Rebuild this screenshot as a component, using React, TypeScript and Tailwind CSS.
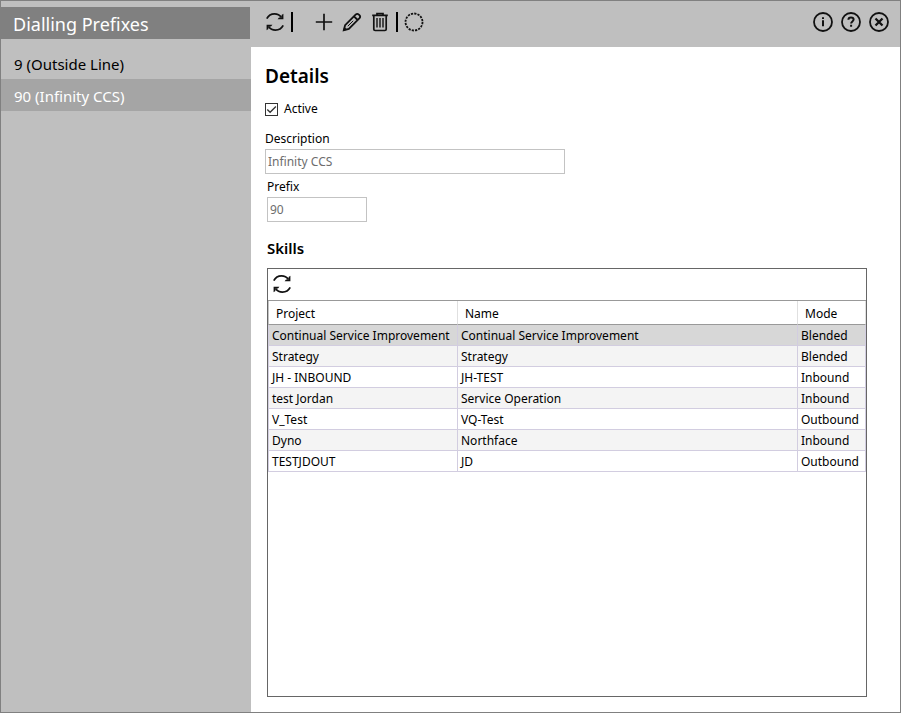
import { useState } from 'react'

const prefixes = ['9 (Outside Line)', '90 (Infinity CCS)']

const skills = [
  { project: 'Continual Service Improvement', name: 'Continual Service Improvement', mode: 'Blended' },
  { project: 'Strategy', name: 'Strategy', mode: 'Blended' },
  { project: 'JH - INBOUND', name: 'JH-TEST', mode: 'Inbound' },
  { project: 'test Jordan', name: 'Service Operation', mode: 'Inbound' },
  { project: 'V_Test', name: 'VQ-Test', mode: 'Outbound' },
  { project: 'Dyno', name: 'Northface', mode: 'Inbound' },
  { project: 'TESTJDOUT', name: 'JD', mode: 'Outbound' },
]

function Icon({ children, width = 2 }: { children: React.ReactNode; width?: number }) {
  return (
    <svg viewBox="0 0 20 20" className="h-5 w-5" fill="none" stroke="currentColor" strokeWidth={width} aria-hidden="true">
      {children}
    </svg>
  )
}

function IconButton({ label, children }: { label: string; children: React.ReactNode }) {
  return (
    <button type="button" aria-label={label} className="flex h-7 w-7 items-center justify-center text-[#111]">
      {children}
    </button>
  )
}

function RefreshIcon() {
  return (
    <Icon width={1.8}>
      <path d="M1.8 6.6C3.4 3.6 6.2 1.9 9.5 1.9c3 0 5.3 1.3 7 3.7" />
      <path d="M18.4 1.8v5.5h-5.8l1.4-1.9h2.6V3z" fill="currentColor" stroke="none" />
      <path d="M18.2 13.4c-1.6 3-4.4 4.7-7.7 4.7-3 0-5.3-1.3-7-3.7" />
      <path d="M1.6 18.2v-5.5h5.8L6 14.6H3.4V17z" fill="currentColor" stroke="none" />
    </Icon>
  )
}

function Separator() {
  return <span className="mx-[2px] h-5 w-[2px] bg-black" />
}

export default function App() {
  const [selected, setSelected] = useState(1)
  const [active, setActive] = useState(true)
  const [description, setDescription] = useState('Infinity CCS')
  const [prefix, setPrefix] = useState('90')

  return (
    <div className="flex min-h-screen border border-[#808080] bg-white font-['Noto_Sans','Open_Sans',sans-serif] text-xs text-black">
      <aside className="w-[250px] shrink-0 bg-[#bfbfbf] pt-[6px]">
        <h1 className="mr-px mb-2 h-8 bg-[#808080] pl-3 text-lg leading-[34px] text-white">Dialling Prefixes</h1>
        <ul>
          {prefixes.map((p, i) => (
            <li key={p}>
              <button
                type="button"
                onClick={() => setSelected(i)}
                className={`block h-8 w-full pl-[13px] text-left text-[15px] leading-[34px] ${i === selected ? 'bg-[#a5a5a5] text-white' : ''}`}
              >
                {p}
              </button>
            </li>
          ))}
        </ul>
      </aside>

      <div className="flex min-w-0 flex-1 flex-col">
        <div className="flex h-[46px] items-center bg-[#bfbfbf] pr-[7px] pb-1 pl-[10px]">
          <IconButton label="Refresh">
            <RefreshIcon />
          </IconButton>
          <Separator />
          <div className="ml-[15px] flex">
            <IconButton label="Add">
              <Icon width={1.7}>
                <path d="M10 1.8v16.4M1.8 10h16.4" />
              </Icon>
            </IconButton>
            <IconButton label="Edit">
              <Icon width={1.8}>
                <path d="M1.8 18.2l1.3-5L13.6 2.7c1-1 2.3-1 3.2-.1l.6.6c.9.9.9 2.2-.1 3.2L6.8 16.9zM12 4.3l3.7 3.7" />
                <path d="M1 19l1.2-4.2 3 3z" fill="currentColor" stroke="none" />
                <path d="M5.8 14.2l5.4-5.4" strokeWidth="1" />
              </Icon>
            </IconButton>
            <IconButton label="Delete">
              <Icon width={1.7}>
                <path d="M2.2 3.3h15.6M7 3V1.5h6V3M3.8 3.5v13.7c0 .8.5 1.3 1.3 1.3h9.8c.8 0 1.3-.5 1.3-1.3V3.5" />
                <path d="M7 6v9.5M10 6v9.5M13 6v9.5" strokeWidth="1.4" />
              </Icon>
            </IconButton>
          </div>
          <Separator />
          <IconButton label="Status">
            <Icon>
              <circle cx="10" cy="10" r="8.5" strokeWidth="1.8" strokeDasharray="2.2 1.138" />
            </Icon>
          </IconButton>
          <div className="ml-auto flex">
            <IconButton label="Information">
              <Icon>
                <circle cx="10" cy="10" r="9" strokeWidth="1.8" />
                <path d="M10 8.3v6M10 5.2v1.9" />
              </Icon>
            </IconButton>
            <IconButton label="Help">
              <Icon>
                <circle cx="10" cy="10" r="9" strokeWidth="1.8" />
                <path d="M7.4 7.8c0-1.5 1.1-2.4 2.6-2.4s2.6.9 2.6 2.2c0 1.9-2.5 1.9-2.5 4M10.1 12.8v2" />
              </Icon>
            </IconButton>
            <IconButton label="Close">
              <Icon>
                <circle cx="10" cy="10" r="9" strokeWidth="1.8" />
                <path d="M6.5 6.5l7 7M13.5 6.5l-7 7" strokeWidth="2.3" />
              </Icon>
            </IconButton>
          </div>
        </div>

        <main className="flex flex-1 flex-col pt-[13px] pr-[33px] pb-[15px] pl-[14px]">
          <h2 className="text-[19px] leading-8 font-semibold">Details</h2>

          <label className="mt-2 flex h-[18px] items-center leading-5">
            <span className="mr-[6px] grid">
              <input
                type="checkbox"
                checked={active}
                onChange={(e) => setActive(e.target.checked)}
                className="peer col-start-1 row-start-1 h-[13px] w-[13px] appearance-none border border-[#333] bg-white"
              />
              <svg viewBox="0 0 13 13" className="pointer-events-none invisible col-start-1 row-start-1 h-[13px] w-[13px] peer-checked:visible" fill="none" stroke="#333" strokeWidth="1.3">
                <path d="M2.3 6.5l2.8 2.8 5.8-5.8" />
              </svg>
            </span>
            Active
          </label>

          <label htmlFor="description" className="mt-[11px] leading-5">Description</label>
          <input
            id="description"
            value={description}
            onChange={(e) => setDescription(e.target.value)}
            className="h-[25px] w-[300px] border border-[#c3c3c3] px-[2px] text-[#6d6d6d]"
          />

          <div className="flex flex-1 flex-col pl-[2px]">
            <label htmlFor="prefix" className="mt-[3px] leading-5">Prefix</label>
            <input
              id="prefix"
              value={prefix}
              onChange={(e) => setPrefix(e.target.value)}
              className="h-[25px] w-[100px] border border-[#c3c3c3] px-[2px] text-[#6d6d6d]"
            />

            <h3 className="mt-[15px] mb-[9px] text-[15px] leading-[22px] font-semibold">Skills</h3>

            <section className="flex-1 border border-[#666]">
              <div className="flex h-8 items-center border-b border-[#999] pb-[2px]">
                <IconButton label="Refresh skills">
                  <RefreshIcon />
                </IconButton>
              </div>
              <table className="w-full table-fixed border-separate border-spacing-0 text-left">
                <colgroup>
                  <col className="w-[190px]" />
                  <col />
                  <col className="w-[68px]" />
                </colgroup>
                <thead>
                  <tr className="h-6 [&>th]:border-r [&>th]:border-b [&>th]:border-r-[#e0e0e0] [&>th]:border-b-[#999] [&>th]:p-0 [&>th]:pt-[3px] [&>th]:pl-[7px] [&>th]:leading-5 [&>th]:font-normal">
                    <th className="border-l border-l-[#c3c3c3]">Project</th>
                    <th>Name</th>
                    <th>Mode</th>
                  </tr>
                </thead>
                <tbody>
                  {skills.map((s, i) => (
                    <tr
                      key={s.project}
                      className={`h-[21px] whitespace-nowrap [&>td]:border-r [&>td]:border-b [&>td]:border-[#d2cde0] [&>td]:p-0 [&>td]:pt-[2px] [&>td]:pl-[3px] [&>td]:leading-[18px] ${i === 0 ? 'bg-[#d7d7d7]' : i % 2 ? 'bg-[#f4f4f4]' : 'bg-white'}`}
                    >
                      <td className="border-l">{s.project}</td>
                      <td>{s.name}</td>
                      <td>{s.mode}</td>
                    </tr>
                  ))}
                </tbody>
              </table>
            </section>
          </div>
        </main>
      </div>
    </div>
  )
}
